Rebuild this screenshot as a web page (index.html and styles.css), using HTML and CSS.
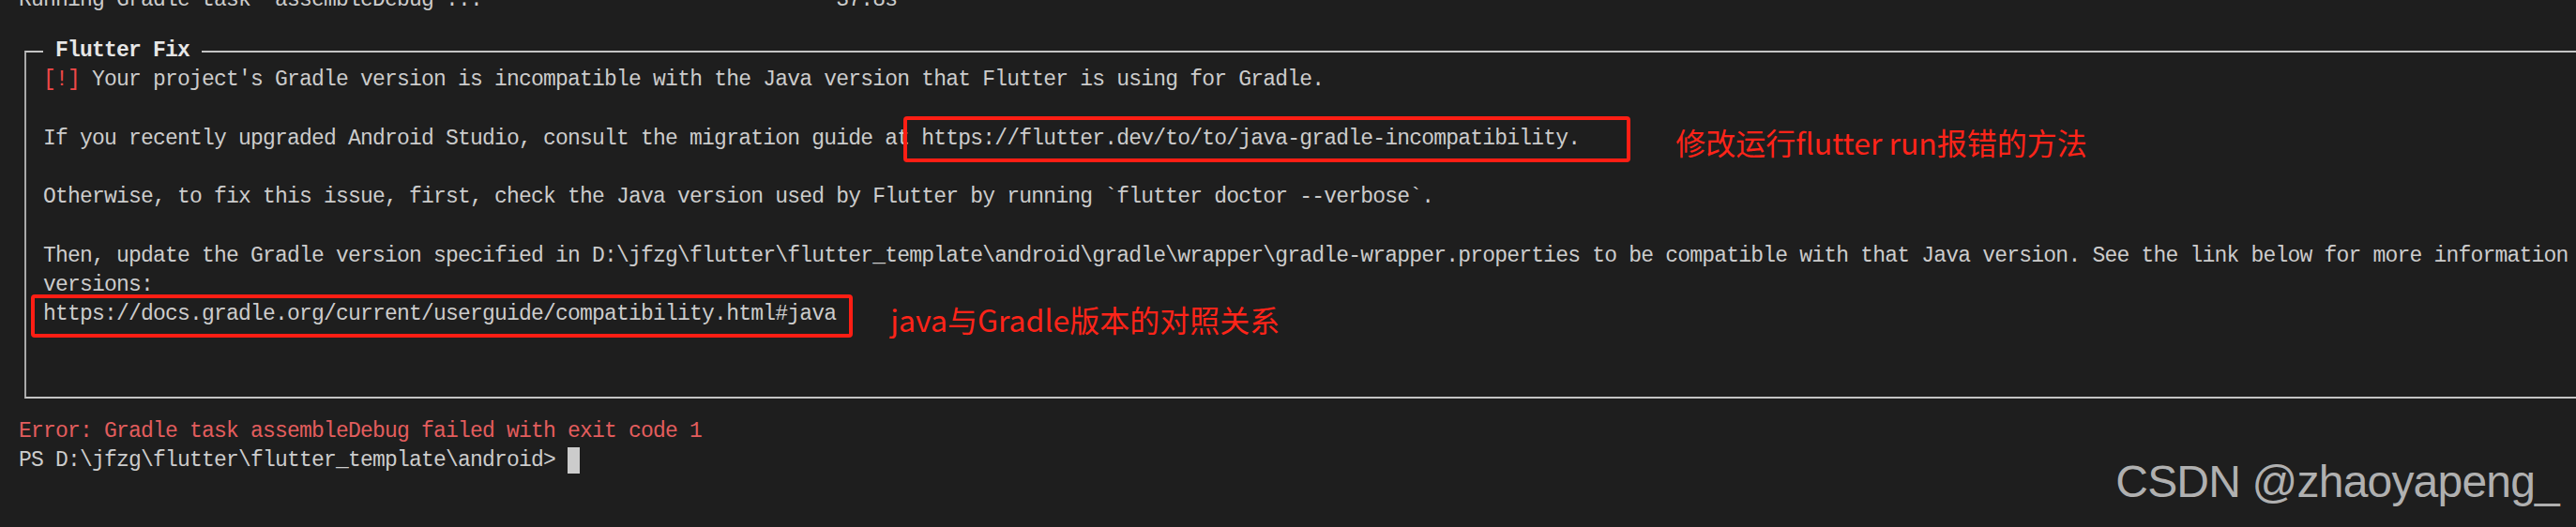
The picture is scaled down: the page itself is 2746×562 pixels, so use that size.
FILE: index.html
```html
<!DOCTYPE html>
<html lang="en">
<head>
    <meta charset="UTF-8">
    <meta name="viewport" content="width=device-width, initial-scale=1.0">
    <title>Terminal - Flutter Fix</title>
    <link rel="stylesheet" href="styles.css">
</head>
<body>
    <div class="term">
        <div class="line top-line">Running Gradle task 'assembleDebug'...                             37.8s</div>

        <!-- Flutter Fix box -->
        <fieldset class="fix">
            <legend>Flutter Fix</legend>
            <div class="line"><span class="warn">[!]</span> Your project's Gradle version is incompatible with the Java version that Flutter is using for Gradle.</div>
            <div class="line"></div>
            <div class="line">If you recently upgraded Android Studio, consult the migration guide at <span class="mark mark-one">https://flutter.dev/to/to/java-gradle-incompatibility.<span class="note note-one">修改运行flutter run报错的方法</span></span></div>
            <div class="line"></div>
            <div class="line">Otherwise, to fix this issue, first, check the Java version used by Flutter by running `flutter doctor --verbose`.</div>
            <div class="line"></div>
            <div class="line">Then, update the Gradle version specified in D:\jfzg\flutter\flutter_template\android\gradle\wrapper\gradle-wrapper.properties to be compatible with that Java version. See the link below for more information on compatible Java/Gradle</div>
            <div class="line">versions:</div>
            <div class="line"><span class="mark mark-two">https://docs.gradle.org/current/userguide/compatibility.html#java<span class="note note-two">java与Gradle版本的对照关系</span></span></div>
            <div class="line"></div>
            <div class="line"></div>
        </fieldset>

        <div class="line error">Error: Gradle task assembleDebug failed with exit code 1</div>
        <div class="line">PS D:\jfzg\flutter\flutter_template\android&gt; <span class="cursor"></span></div>
    </div>

    <div class="watermark">CSDN @zhaoyapeng_</div>
</body>
</html>
```

FILE: styles.css
```css
html, body {
    height: 100%;
}

body {
    margin: 0;
    background-color: #1e1e1e;
    color: #cccccc;
    font-family: "Liberation Mono", "DejaVu Sans Mono", monospace;
    font-size: 23px;
    letter-spacing: -0.8px;
    overflow: hidden;
}

.term {
    padding-left: 20px;
}

.line {
    height: 31.2px;
    line-height: 31.2px;
    white-space: pre;
}

.top-line {
    margin-top: -14.6px;
}

/* Flutter Fix box */
.fix {
    margin: 22.6px 0 20px 6px;
    padding: 0 0 9.4px 18px;
    min-width: 0;
    border: none;
    border-top: 2px solid #c4c4c4;
    border-left: 2px solid #a9a9a9;
    border-bottom: 2px solid #c4c4c4;
}

.fix legend {
    padding: 0 13px;
    line-height: 31.2px;
    font-weight: bold;
    color: #e6e6e6;
}

.warn {
    color: #f04848;
}

.error {
    color: #e35d5d;
}

.cursor {
    display: inline-block;
    width: 13px;
    height: 28px;
    background-color: #cccccc;
    vertical-align: middle;
}

/* red annotation frames */
.mark {
    display: inline-block;
    position: relative;
    height: 31.2px;
}

.mark::after {
    content: "";
    position: absolute;
    border: 4px solid #ff1e14;
    border-radius: 4px;
}

.mark-one::after {
    left: -19px;
    right: -54px;
    top: -9px;
    bottom: -9px;
}

.mark-two::after {
    left: -13px;
    right: -18px;
    top: -6px;
    bottom: -9px;
}

.note {
    position: absolute;
    top: 50%;
    transform: translateY(-50%);
    font-family: "Noto Sans CJK SC", "Noto Sans", sans-serif;
    font-size: 32px;
    letter-spacing: 0;
    line-height: 1.2;
    color: #ff2419;
    white-space: nowrap;
}

.note-one {
    left: calc(100% + 102px);
    margin-top: 3px;
}

.note-two {
    left: calc(100% + 58px);
    margin-top: 5px;
}

.watermark {
    position: absolute;
    right: 18px;
    bottom: 24px;
    font-family: "Liberation Sans", Arial, sans-serif;
    font-size: 48px;
    line-height: 1;
    color: #b0b0b0;
}
```
